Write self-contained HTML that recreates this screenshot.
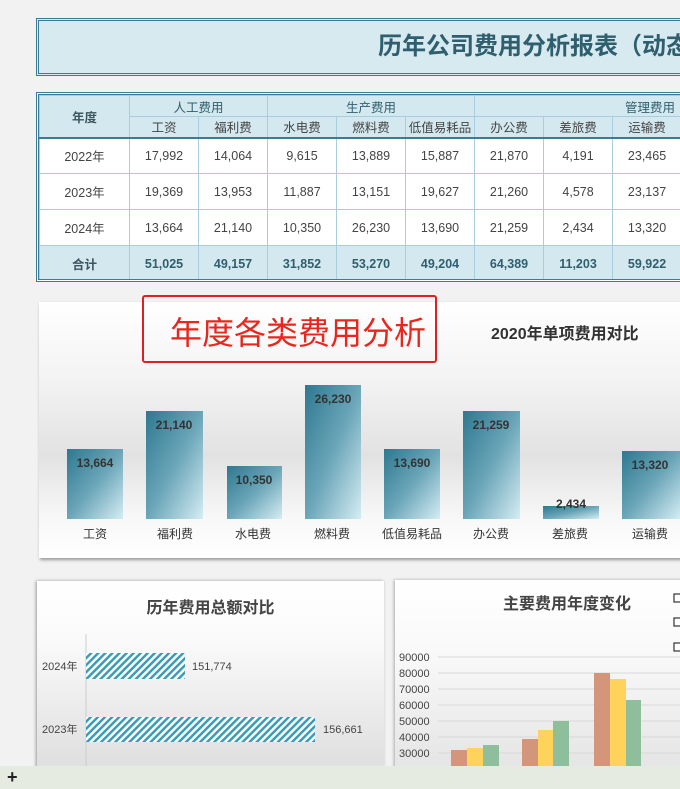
<!DOCTYPE html>
<html><head><meta charset="utf-8"><style>
*{margin:0;padding:0;box-sizing:border-box}
body{width:680px;height:789px;overflow:hidden;background:#f2f2f2;font-family:"Liberation Sans","Noto Sans CJK SC",sans-serif;position:relative}
.abs{position:absolute}
table{border-collapse:collapse;table-layout:fixed}
td{text-align:center;font-size:12.5px;color:#444;border:1px solid #a9cddd;white-space:nowrap;overflow:hidden}
</style></head><body>
<div class="abs" style="left:36px;top:18px;width:650px;height:58px;border:3px double #3a7d93;background:#d7eaf0"></div>
<div class="abs" style="left:378px;top:32px;font-size:24px;font-weight:bold;color:#2f5f6e;white-space:nowrap;line-height:30px">历年公司费用分析报表（动态</div>

<div class="abs" style="left:36px;top:92px;width:650px;height:190px;border:3px double #3a7d93;background:#fff;overflow:hidden">
<table style="width:642px">
<colgroup><col style="width:90px"><col style="width:69px"><col style="width:69px"><col style="width:69px"><col style="width:69px"><col style="width:69px"><col style="width:69px"><col style="width:69px"><col style="width:69px"></colgroup>
<tr style="height:21px;background:#d4e8ef"><td rowspan="2" style="font-weight:bold;color:#3d5560">年度</td><td colspan="2" style="color:#2f5f6e">人工费用</td><td colspan="3" style="color:#2f5f6e">生产费用</td><td colspan="3" style="color:#2f5f6e;text-align:right;padding-right:6px">管理费用</td></tr>
<tr style="height:21px;background:#d4e8ef"><td>工资</td><td>福利费</td><td>水电费</td><td>燃料费</td><td>低值易耗品</td><td>办公费</td><td>差旅费</td><td>运输费</td></tr>
<tr style="height:36px;border-top:2px solid #3a7d93"><td>2022年</td><td>17,992</td><td>14,064</td><td>9,615</td><td>13,889</td><td>15,887</td><td>21,870</td><td>4,191</td><td>23,465</td></tr>
<tr style="height:36px"><td>2023年</td><td>19,369</td><td>13,953</td><td>11,887</td><td>13,151</td><td>19,627</td><td>21,260</td><td>4,578</td><td>23,137</td></tr>
<tr style="height:36px"><td>2024年</td><td>13,664</td><td>21,140</td><td>10,350</td><td>26,230</td><td>13,690</td><td>21,259</td><td>2,434</td><td>13,320</td></tr>
<tr style="height:36px;background:#d4e8ef;font-weight:bold"><td style="font-weight:bold;color:#3d5560">合计</td><td style="font-weight:bold;color:#2f5f6e">51,025</td><td style="font-weight:bold;color:#2f5f6e">49,157</td><td style="font-weight:bold;color:#2f5f6e">31,852</td><td style="font-weight:bold;color:#2f5f6e">53,270</td><td style="font-weight:bold;color:#2f5f6e">49,204</td><td style="font-weight:bold;color:#2f5f6e">64,389</td><td style="font-weight:bold;color:#2f5f6e">11,203</td><td style="font-weight:bold;color:#2f5f6e">59,922</td></tr>
</table></div>

<div class="abs" style="left:39px;top:302px;width:650px;height:256px;background:linear-gradient(#fff 0%,#f3f3f3 30%,#e2e2e2 60%,#f8f8f8 85%,#fff 100%);box-shadow:1px 2px 3px #999"></div>
<div class="abs" style="left:142px;top:295px;width:295px;height:68px;border:2px solid #e02020;border-radius:3px"></div>
<div class="abs" style="left:170px;top:308px;font-size:32px;color:#e8261e;white-space:nowrap">年度各类费用分析</div>
<div class="abs" style="left:491px;top:320px;font-size:16px;font-weight:bold;color:#333;white-space:nowrap">2020年单项费用对比</div>
<svg class="abs" style="left:0;top:0" width="680" height="789">
<defs><linearGradient id="g" x1="0" y1="0" x2="1" y2="1"><stop offset="0" stop-color="#2e7890"/><stop offset="0.5" stop-color="#6aa5b8"/><stop offset="1" stop-color="#d5edf3"/></linearGradient>
<pattern id="h" width="5" height="5" patternUnits="userSpaceOnUse" patternTransform="rotate(45)"><rect width="5" height="5" fill="#fff"/><rect width="2.5" height="5" fill="#3a9db5"/></pattern></defs>
<g font-size="12" font-weight="bold" fill="#333" text-anchor="middle">
<rect x="67" y="449" width="56" height="70" fill="url(#g)"/><text x="95" y="467">13,664</text>
<rect x="146" y="411" width="57" height="108" fill="url(#g)"/><text x="174" y="429">21,140</text>
<rect x="227" y="466" width="55" height="53" fill="url(#g)"/><text x="254" y="484">10,350</text>
<rect x="305" y="385" width="56" height="134" fill="url(#g)"/><text x="333" y="403">26,230</text>
<rect x="384" y="449" width="56" height="70" fill="url(#g)"/><text x="412" y="467">13,690</text>
<rect x="463" y="411" width="57" height="108" fill="url(#g)"/><text x="491" y="429">21,259</text>
<rect x="543" y="506" width="56" height="13" fill="url(#g)"/><text x="571" y="508">2,434</text>
<rect x="622" y="451" width="58" height="68" fill="url(#g)"/><text x="650" y="469">13,320</text>
</g>
<g font-size="12" fill="#333" text-anchor="middle">
<text x="95" y="538">工资</text><text x="175" y="538">福利费</text><text x="253" y="538">水电费</text><text x="332" y="538">燃料费</text><text x="412" y="538">低值易耗品</text><text x="491" y="538">办公费</text><text x="570" y="538">差旅费</text><text x="650" y="538">运输费</text>
</g>
</svg>

<div class="abs" style="left:37px;top:581px;width:347px;height:200px;background:linear-gradient(#fff,#fafafa 30%,#e0e0e0 90%);box-shadow:-1px 0 3px #999"></div>
<div class="abs" style="left:395px;top:580px;width:290px;height:200px;background:linear-gradient(#fff,#f8f8f8 40%,#e6e6e6 90%);box-shadow:-1px 0 3px #aaa"></div>
<div class="abs" style="left:37px;top:594px;width:347px;text-align:center;font-size:16px;font-weight:bold;color:#444">历年费用总额对比</div>
<div class="abs" style="left:503px;top:590px;font-size:16px;font-weight:bold;color:#444;white-space:nowrap">主要费用年度变化</div>
<svg class="abs" style="left:0;top:0" width="680" height="789">
<line x1="86" y1="634" x2="86" y2="770" stroke="#ccc"/>
<rect x="86" y="653" width="99" height="26" fill="url(#h)"/>
<rect x="86" y="717" width="229" height="25" fill="url(#h)"/>
<g font-size="11" fill="#444"><text x="42" y="670">2024年</text><text x="42" y="733">2023年</text><text x="192" y="670">151,774</text><text x="323" y="733">156,661</text></g>
<g stroke="#d8d8d8"><line x1="438" y1="657" x2="680" y2="657"/><line x1="438" y1="673" x2="680" y2="673"/><line x1="438" y1="689" x2="680" y2="689"/><line x1="438" y1="705" x2="680" y2="705"/><line x1="438" y1="721" x2="680" y2="721"/><line x1="438" y1="737" x2="680" y2="737"/><line x1="438" y1="753" x2="680" y2="753"/></g>
<g font-size="11" fill="#444"><text x="399" y="661">90000</text><text x="399" y="677">80000</text><text x="399" y="693">70000</text><text x="399" y="709">60000</text><text x="399" y="725">50000</text><text x="399" y="741">40000</text><text x="399" y="757">30000</text></g>
<rect x="451" y="750" width="16" height="20" fill="#d4967a"/><rect x="467" y="748" width="16" height="22" fill="#fdd35c"/><rect x="483" y="745" width="16" height="25" fill="#8fbe9c"/>
<rect x="522" y="739" width="16" height="31" fill="#d4967a"/><rect x="538" y="730" width="15" height="40" fill="#fdd35c"/><rect x="553" y="721" width="16" height="49" fill="#8fbe9c"/>
<rect x="594" y="673" width="16" height="97" fill="#d4967a"/><rect x="610" y="679" width="16" height="91" fill="#fdd35c"/><rect x="626" y="700" width="15" height="70" fill="#8fbe9c"/>
<g fill="#fff" stroke="#333" stroke-width="1.2"><rect x="674" y="594" width="8" height="8"/><rect x="674" y="618" width="8" height="8"/><rect x="674" y="643" width="8" height="8"/></g>
</svg>
<div class="abs" style="left:0;top:766px;width:680px;height:23px;background:#e6ebe2;font-size:18px;font-weight:bold;color:#222;padding-left:7px;line-height:22px">+</div>
</body></html>
